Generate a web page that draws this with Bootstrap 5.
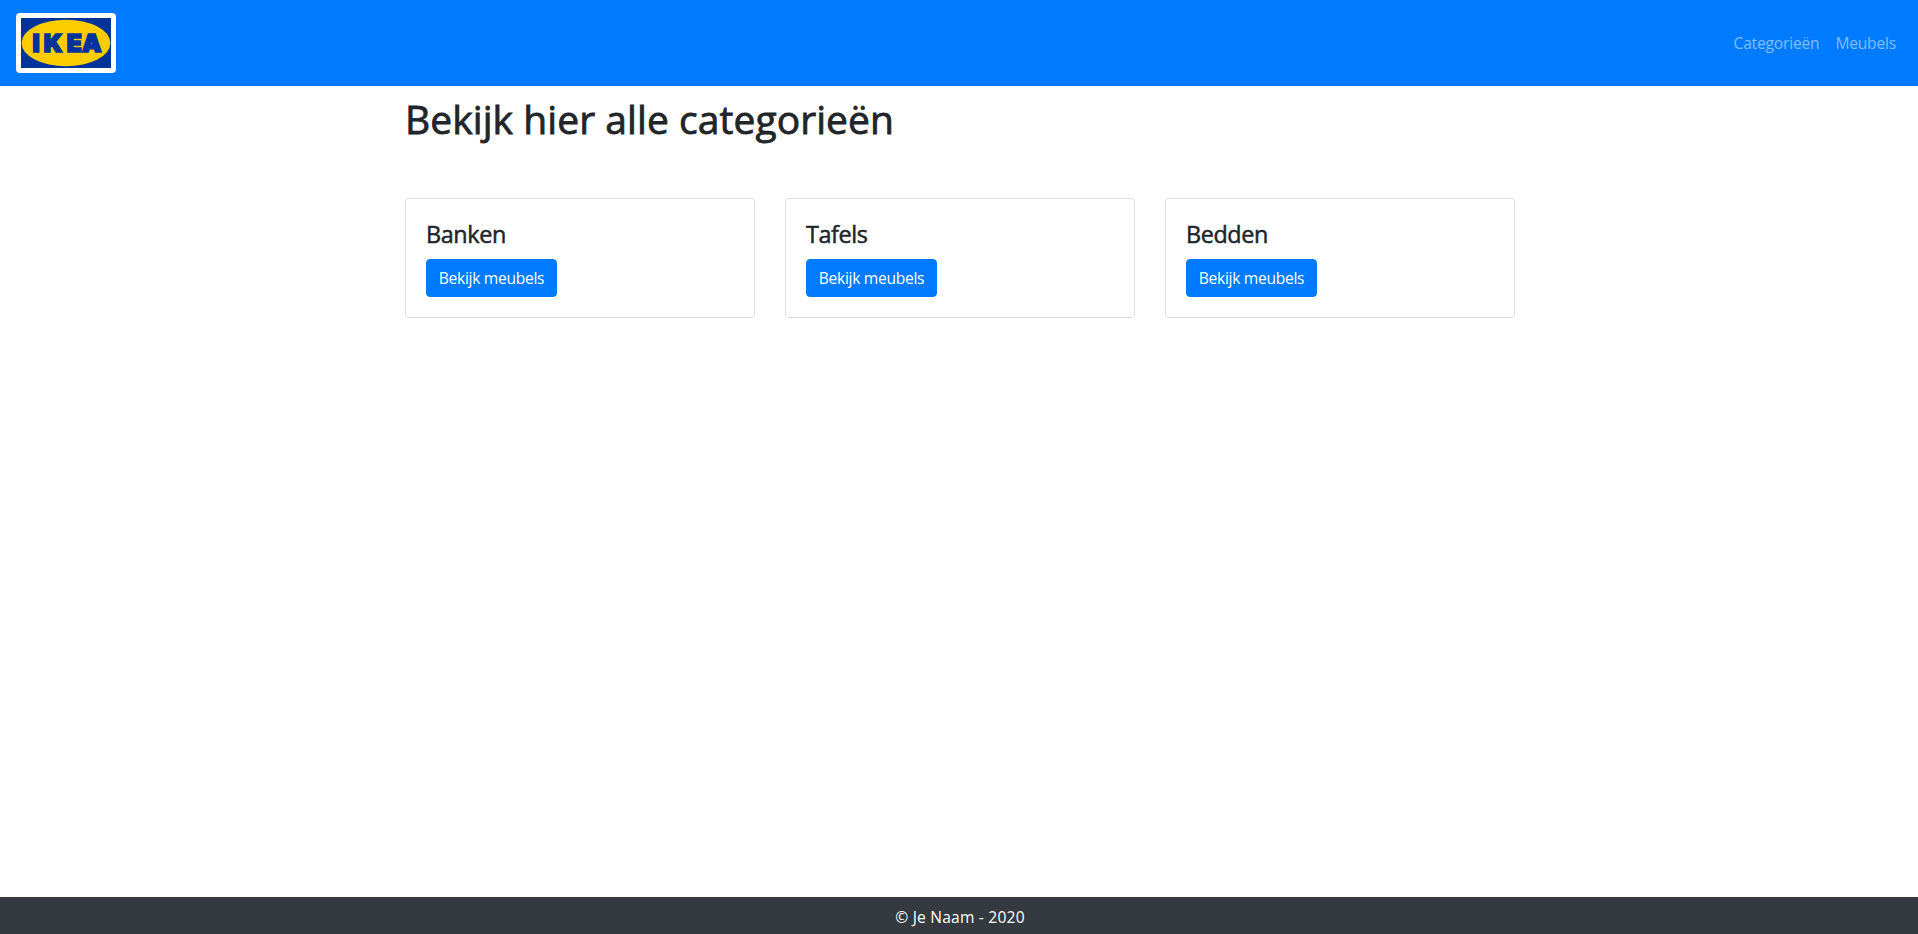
<!DOCTYPE html>
<html lang="nl">
<head>
<meta charset="utf-8">
<meta name="viewport" content="width=device-width, initial-scale=1">
<title>Categorieën</title>
<link href="https://cdn.jsdelivr.net/npm/bootstrap@5.3.0/dist/css/bootstrap.min.css" rel="stylesheet">
<style>
html { overflow: hidden; }
body { width: 1920px; height: 100vh; font-family: "Open Sans", "Noto Sans", sans-serif; color: #212529; font-size: 15.6px; line-height: 24px; letter-spacing: -.3px; }
.site-nav { background: #007bff; --bs-navbar-color: rgba(255,255,255,.5); }
.site-nav .nav-link { letter-spacing: -.2px; }
.navbar-brand { margin: 0; }
.logo { display: block; width: 100px; height: 60px; padding: 5px; background: #fff; border-radius: 4px; }
.logo svg { display: block; }
.page { width: 1140px; padding: 0 15px; }
.page-title { font-size: 39px; line-height: 50px; height: 48px; letter-spacing: .06px; -webkit-text-stroke: .8px #212529; }
.cards { --bs-gutter-x: 30px; margin-top: 56px; }
.card { border-radius: 4px; border-color: #dfdfdf; height: 120px; }
.card-body { padding: 20px; }
.card-title { font-size: 23.4px; line-height: 30px; margin-bottom: 10px; letter-spacing: -.4px; -webkit-text-stroke: .5px #212529; }
.btn-primary { --bs-btn-bg: #007bff; --bs-btn-border-color: #007bff; border-radius: 4px; width: 131px; height: 38px; padding: 6px 0; font-size: 15.6px; line-height: 24px; }
footer { background: #343a40; height: 37px; padding-top: 8px; letter-spacing: .2px; }
</style>
</head>
<body class="d-flex flex-column">
<nav class="navbar navbar-expand site-nav px-3 py-2">
  <a class="navbar-brand" href="#"><span class="logo">
    <svg width="90" height="50" viewBox="0 0 90 50" role="img" aria-label="IKEA">
      <rect width="90" height="50" fill="#003399"/>
      <ellipse cx="45" cy="25" rx="44.4" ry="23.2" fill="#ffcc00"/>
      <text y="33.6" x="11.4 22.8 45.7 61" font-family="Inter, sans-serif" font-weight="900" font-size="24.5" letter-spacing="0" fill="#003399" stroke="#003399" stroke-width="1.7">IKEA</text>
    </svg></span></a>
  <div class="navbar-nav ms-auto">
    <a class="nav-link" href="#">Categorieën</a>
    <a class="nav-link" href="#">Meubels</a>
  </div>
</nav>
<main class="page mx-auto flex-grow-1">
  <h1 class="page-title mt-2 mb-0">Bekijk hier alle categorieën</h1>
  <div class="row cards">
    <div class="col-4"><div class="card"><div class="card-body"><h4 class="card-title">Banken</h4><a class="btn btn-primary" href="#">Bekijk meubels</a></div></div></div>
    <div class="col-4"><div class="card"><div class="card-body"><h4 class="card-title">Tafels</h4><a class="btn btn-primary" href="#">Bekijk meubels</a></div></div></div>
    <div class="col-4"><div class="card"><div class="card-body"><h4 class="card-title">Bedden</h4><a class="btn btn-primary" href="#">Bekijk meubels</a></div></div></div>
  </div>
</main>
<footer class="text-white text-center">© Je Naam - 2020</footer>
<script src="https://cdn.jsdelivr.net/npm/bootstrap@5.3.0/dist/js/bootstrap.bundle.min.js"></script>
</body>
</html>
